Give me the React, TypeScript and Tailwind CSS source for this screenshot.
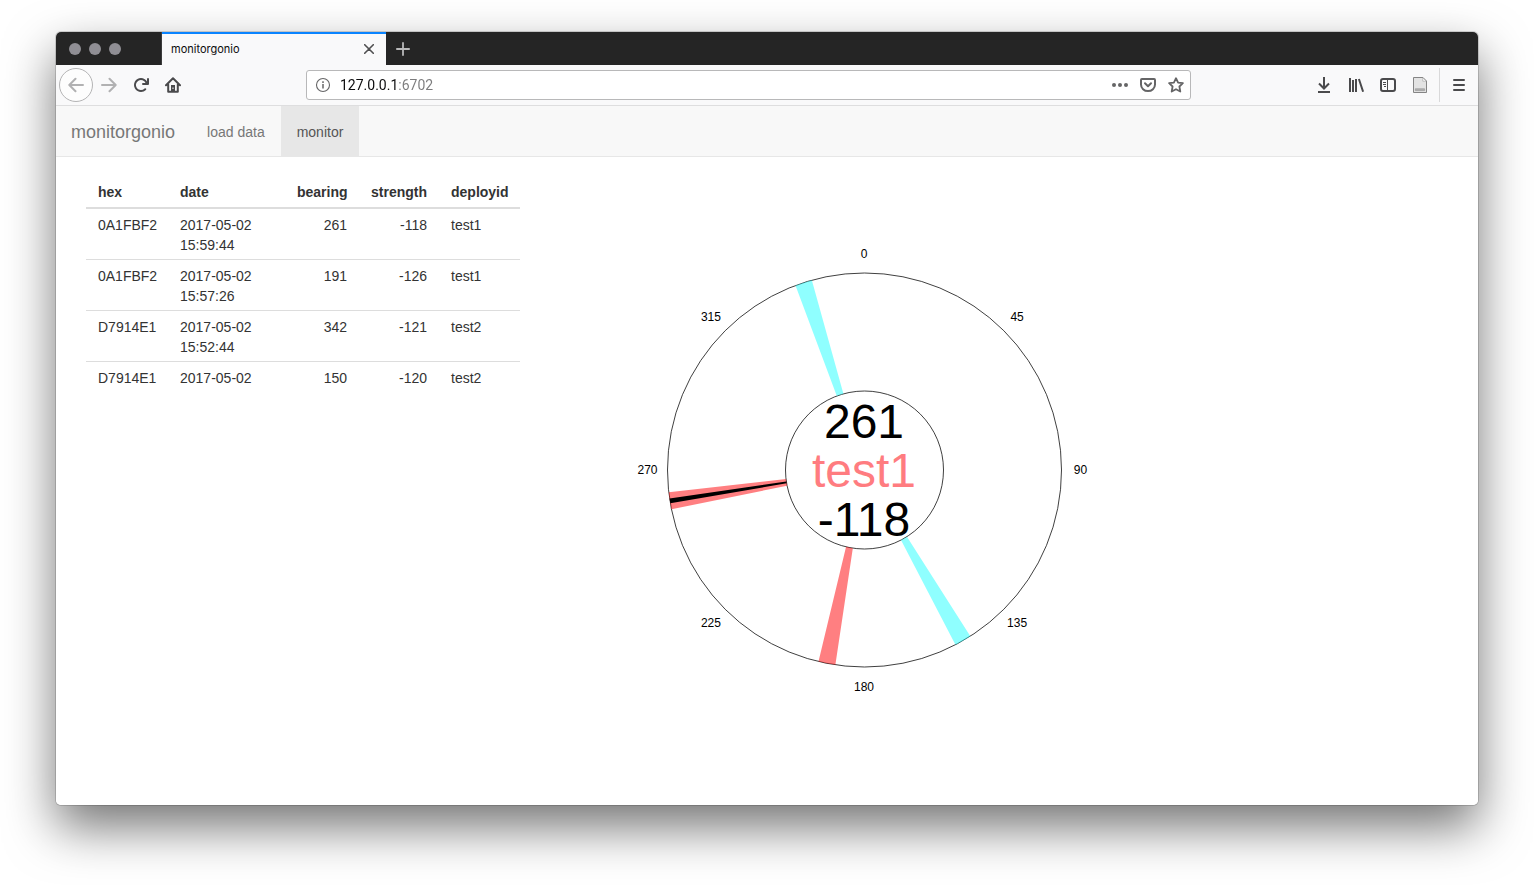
import React from "react";

type Reading = { hex: string; day: string; time?: string; bearing: number; strength: number; deployid: string };

const readings: Reading[] = [
  { hex: "0A1FBF2", day: "2017-05-02", time: "15:59:44", bearing: 261, strength: -118, deployid: "test1" },
  { hex: "0A1FBF2", day: "2017-05-02", time: "15:57:26", bearing: 191, strength: -126, deployid: "test1" },
  { hex: "D7914E1", day: "2017-05-02", time: "15:52:44", bearing: 342, strength: -121, deployid: "test2" },
  { hex: "D7914E1", day: "2017-05-02", bearing: 150, strength: -120, deployid: "test2" },
];

const OUTER = 197;
const INNER = 79;

function point(deg: number, r: number) {
  const a = (deg * Math.PI) / 180;
  return `${(Math.sin(a) * r).toFixed(2)} ${(-Math.cos(a) * r).toFixed(2)}`;
}

function wedge(bearing: number, half: number) {
  const a = bearing - half;
  const b = bearing + half;
  return `M${point(a, INNER)} L${point(a, OUTER)} A${OUTER} ${OUTER} 0 0 1 ${point(b, OUTER)} L${point(b, INNER)} A${INNER} ${INNER} 0 0 0 ${point(a, INNER)} Z`;
}

function Icon({ children, size = 16 }: { children: React.ReactNode; size?: number }) {
  return (
    <svg width={size} height={size} viewBox="0 0 16 16" fill="none" stroke="currentColor" strokeWidth="2" strokeLinecap="round" strokeLinejoin="round" aria-hidden="true">
      {children}
    </svg>
  );
}

function ToolButton({ label, children }: { label: string; children: React.ReactNode }) {
  return (
    <button type="button" aria-label={label} className="flex h-8 w-8 shrink-0 items-center justify-center text-[#4a4a4c]">
      {children}
    </button>
  );
}

function TabStrip() {
  return (
    <div className="flex h-[33px] bg-[#252525]">
      <div className="flex w-[106px] items-center gap-2 border-r border-[#3c3c3c] pl-[13px]">
        <button type="button" aria-label="Close window" className="h-3 w-3 rounded-full bg-[#8f8e94]" />
        <button type="button" aria-label="Minimize window" className="h-3 w-3 rounded-full bg-[#8f8e94]" />
        <button type="button" aria-label="Zoom window" className="h-3 w-3 rounded-full bg-[#8f8e94]" />
      </div>
      <div className="flex w-56 items-center justify-between border-t-2 border-[#0a84ff] bg-[#f9f9fa] pb-px pl-[9px] pr-3">
        <span className="font-['Inter',sans-serif] text-[11px] text-[#0c0c0d]">monitorgonio</span>
        <button type="button" aria-label="Close tab" className="text-[#4f4f50]">
          <svg width="10" height="10" viewBox="0 0 10 10" fill="none" stroke="currentColor" strokeWidth="1.6" strokeLinecap="round">
            <path d="M.7.7l8.600 8.600M9.300.7L.7 9.300" />
          </svg>
        </button>
      </div>
      <button type="button" aria-label="New tab" className="flex w-[34px] items-center justify-center text-[#b9b9ba]">
        <svg width="14" height="14" viewBox="0 0 14 14" fill="none" stroke="currentColor" strokeWidth="1.8" strokeLinecap="round">
          <path d="M7 .9v12.200M.9 7h12.200" />
        </svg>
      </button>
    </div>
  );
}

function Toolbar() {
  return (
    <div className="flex h-[41px] items-center border-b border-[#dededf] bg-[#f9f9fa] px-[3px]">
      <button type="button" aria-label="Back" className="flex h-[34px] w-[34px] shrink-0 items-center justify-center rounded-full border border-[#b4b4b5] bg-[#fdfdfd] text-[#b1b1b2]">
        <Icon>
          <path d="M15 8H1.500M7.500 1.800L1.300 8l6.200 6.200" />
        </Icon>
      </button>
      <button type="button" aria-label="Forward" className="flex h-8 w-8 shrink-0 items-center justify-center text-[#b1b1b2]">
        <Icon>
          <path d="M1 8h13.500M8.500 1.800L14.700 8l-6.200 6.200" />
        </Icon>
      </button>
      <ToolButton label="Reload">
        <Icon>
          <path fill="currentColor" stroke="none" d="M15 1a1 1 0 0 0-1 1v2.418A6.995 6.995 0 1 0 8 15a6.954 6.954 0 0 0 4.950-2.050 1 1 0 0 0-1.414-1.414A5.019 5.019 0 1 1 12.549 6H10a1 1 0 0 0 0 2h5a1 1 0 0 0 1-1V2a1 1 0 0 0-1-1z" />
        </Icon>
      </ToolButton>
      <ToolButton label="Home">
        <Icon>
          <path d="M1 8.200L8 1.200l7 7M3.200 7.500v7.300h9.600V7.500" />
          <path fill="currentColor" stroke="none" d="M6 8h4v7H6z" />
          <path fill="#f9f9fa" stroke="none" d="M7.500 10.500h1v1.500h-1z" />
        </Icon>
      </ToolButton>
      <div className="w-[117px] shrink" />
      <div className="flex h-[30px] min-w-0 flex-1 items-center rounded-[3px] border border-[#b8b8b9] bg-white pl-2 text-[#656566]">
        <Icon>
          <circle cx="8" cy="8" r="6.500" strokeWidth="1.100" />
          <path strokeWidth="1.500" strokeLinecap="butt" d="M8 7v4.500M8 4.300v1.600" />
        </Icon>
        <input
          type="text"
          aria-label="Address"
          defaultValue="127.0.0.1:6702"
          className="ml-[9px] min-w-0 flex-1 bg-[linear-gradient(to_right,#0c0c0d_57px,#7b7b7c_57px)] bg-clip-text font-['Roboto',sans-serif] text-[14px] text-transparent outline-none"
        />
        <div className="flex gap-3 pr-[6px]">
          <button type="button" aria-label="Page actions">
            <Icon>
              <g fill="currentColor" stroke="none">
                <circle cx="2" cy="8" r="2" />
                <circle cx="8" cy="8" r="2" />
                <circle cx="14" cy="8" r="2" />
              </g>
            </Icon>
          </button>
          <button type="button" aria-label="Save to Pocket">
            <Icon>
              <path d="M1.900 2h12.200a.9.9 0 0 1 .9.9V7.500a7 6.600 0 0 1-14 0V2.900A.9.9 0 0 1 1.900 2z" />
              <path d="M5 6.300l3 2.900 3-2.900" />
            </Icon>
          </button>
          <button type="button" aria-label="Bookmark this page">
            <Icon>
              <path strokeWidth="1.800" d="M8 1.200l2.100 4.400 4.800.6-3.500 3.300.9 5L8 12.200l-4.300 2.300.9-5L1.100 6.200l4.800-.6z" />
            </Icon>
          </button>
        </div>
      </div>
      <div className="w-[117px] shrink" />
      <ToolButton label="Downloads">
        <Icon>
          <path strokeLinecap="butt" strokeLinejoin="miter" d="M8 0v11M3 6.500l5 5 5-5M2 15h12" />
        </Icon>
      </ToolButton>
      <ToolButton label="Library">
        <Icon>
          <path strokeLinecap="butt" d="M2 1v14M5 3v12M8 2v13M10.900 2l4.200 12.700" />
        </Icon>
      </ToolButton>
      <ToolButton label="Sidebars">
        <Icon>
          <rect x="1" y="2" width="14" height="12" rx="2" />
          <path strokeLinecap="butt" strokeWidth="1" d="M7.500 2v12M3 5.500h3M3 7.500h3M4 9.500h2" />
        </Icon>
      </ToolButton>
      <ToolButton label="Reader">
        <svg width="16" height="16" viewBox="0 0 16 16" fill="none" aria-hidden="true">
          <path fill="#e3e3e3" stroke="#858585" d="M1.500.5h9.500l3.500 3.500v11.500h-13z" />
          <path fill="#fff" stroke="#a0a0a0" strokeWidth=".6" d="M10.800.8v3.400h3.400z" />
          <path fill="#b0b0b0" stroke="#999" strokeWidth=".7" d="M3.300 11.800h9.300v1.800H3.300z" />
        </svg>
      </ToolButton>
      <div className="mx-[3px] h-[34px] w-px shrink-0 bg-[#d9d9da]" />
      <ToolButton label="Menu">
        <Icon>
          <path d="M3 3h10M3 8h10M3 13h10" />
        </Icon>
      </ToolButton>
    </div>
  );
}

function NavBar() {
  return (
    <nav className="flex h-[51px] border-b border-[#e7e7e7] bg-[#f8f8f8] text-[14px] leading-5 text-[#777]">
      <a href="#home" className="py-4 pl-[15px] pr-4 text-[18px] leading-5">monitorgonio</a>
      <a href="#load" className="px-4 py-4">load data</a>
      <a href="#monitor" aria-current="page" className="bg-[#e7e7e7] px-4 py-4 text-[#555]">monitor</a>
    </nav>
  );
}

function ReadingsTable() {
  const cell = "border-t border-[#ddd] px-3 pt-[6px] pb-1 align-top";
  const head = "border-b-2 border-[#ddd] px-3 py-[5px] font-bold";
  return (
    <table className="w-full table-fixed border-separate border-spacing-0 text-left text-[14px] leading-5 text-[#333]">
      <colgroup>
        <col className="w-[82px]" />
        <col className="w-[117px]" />
        <col className="w-[74px]" />
        <col className="w-[80px]" />
        <col className="w-[81px]" />
      </colgroup>
      <thead>
        <tr>
          <th className={head}>hex</th>
          <th className={head}>date</th>
          <th className={`${head} text-right`}>bearing</th>
          <th className={`${head} text-right`}>strength</th>
          <th className={head}>deployid</th>
        </tr>
      </thead>
      <tbody className="[&>tr:first-child>td]:border-t-0">
        {readings.map((r, i) => (
          <tr key={i}>
            <td className={cell}>{r.hex}</td>
            <td className={cell}>
              {r.day}
              {r.time && <br />}
              {r.time}
            </td>
            <td className={`${cell} text-right`}>{r.bearing}</td>
            <td className={`${cell} text-right`}>{r.strength}</td>
            <td className={cell}>{r.deployid}</td>
          </tr>
        ))}
      </tbody>
    </table>
  );
}

function BearingDial() {
  const current = readings[0];
  return (
    <svg viewBox="-334 -293 668 586" className="w-[668px] max-w-full" role="img" aria-label="Bearing dial" textAnchor="middle">
      <g transform="translate(.5 0)">
        <circle r={OUTER} fill="none" stroke="#000" strokeWidth="1" strokeOpacity=".75" />
        <circle r={INNER} fill="none" stroke="#000" strokeWidth="1" strokeOpacity=".75" />
        {readings.map((r) => (
          <path key={r.bearing} d={wedge(r.bearing, 2.5)} fill={r.deployid === "test1" ? "#ff0004" : "#20ffff"} fillOpacity=".5" />
        ))}
        <path d={wedge(current.bearing, 0.7)} fill="#000" />
      </g>
      {[0, 45, 90, 135, 180, 225, 270, 315].map((deg) => {
        const [x, y] = point(deg, 216.5).split(" ").map(Number);
        return (
          <text key={deg} x={x} y={y + 4} fontSize="12" fill="#000">
            {deg}
          </text>
        );
      })}
      <g fontSize="48">
        <text y="-32">{current.bearing}</text>
        <text y="17" fill="#ff7c80">{current.deployid}</text>
        <text y="66">{current.strength}</text>
      </g>
    </svg>
  );
}

export default function App() {
  return (
    <div className="flex min-h-screen flex-col bg-white px-14 pb-20 pt-8 font-['Liberation_Sans',Arial,sans-serif]">
      <div className="flex flex-1 flex-col rounded-[5px] shadow-[0_0_0_1px_rgba(0,0,0,0.15),0_22px_50px_rgba(0,0,0,0.55)]">
        <div className="flex flex-1 flex-col overflow-hidden rounded-[5px] bg-white">
          <TabStrip />
          <Toolbar />
          <NavBar />
          <main className="flex items-start pt-5">
            <section className="w-1/3 pl-[30px] pr-[10px]">
              <ReadingsTable />
            </section>
            <section className="w-2/3">
              <BearingDial />
            </section>
          </main>
        </div>
      </div>
    </div>
  );
}
